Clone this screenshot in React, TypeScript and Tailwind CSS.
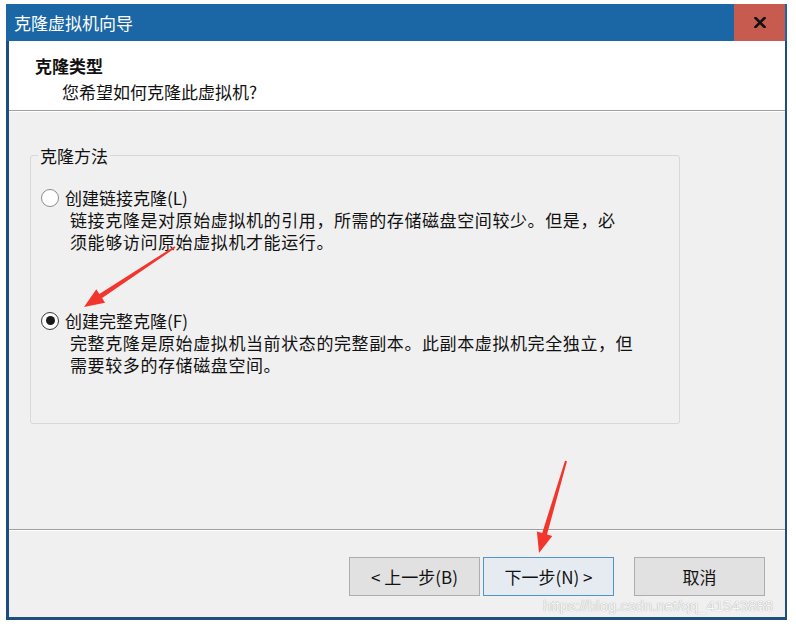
import React from "react";

const cjk = "font-['Noto_Sans_CJK_SC','Noto_Sans',sans-serif]";

const Radio = ({ checked }: { checked?: boolean }) => (
  <span
    className={`flex h-[18px] w-[18px] shrink-0 items-center justify-center rounded-full border bg-white ${
      checked ? "border-[#3a3a3a]" : "border-[#8c8c8c]"
    }`}
  >
    {checked && <span className="h-[9px] w-[9px] rounded-full bg-[#1a1a1a]" />}
  </span>
);

const Option = ({
  label,
  lines,
  checked,
  className,
}: {
  label: string;
  lines: string[];
  checked?: boolean;
  className?: string;
}) => (
  <div className={className}>
    <div className="flex items-center gap-[6px] pl-[10px] leading-[21px]">
      <Radio checked={checked} />
      <span>{label}</span>
    </div>
    <div className="mt-[1px] pl-[39px] leading-[22px] tracking-[0.6px]">
      {lines.map((l) => (
        <div key={l}>{l}</div>
      ))}
    </div>
  </div>
);

const Button = ({ children, primary }: { children: React.ReactNode; primary?: boolean }) => (
  <button
    className={`flex h-[39px] w-[131px] items-center justify-center border text-[17px] text-[#111] ${
      primary ? "border-[#4f93cf] bg-[#e5ebf1]" : "border-[#adadad] bg-[#e1e1e1]"
    }`}
  >
    {children}
  </button>
);

export default function App() {
  return (
    <div className={`relative h-[629px] w-[796px] overflow-hidden bg-white pl-[6px] pt-[4px] ${cjk}`}>
      <div className="flex h-[616px] w-[781px] flex-col bg-[#1d4e7d]">
        {/* title bar */}
        <div className="flex h-[37px] items-center bg-[#1b67a5]">
          <span className="pl-[8px] text-[17px] text-white">克隆虚拟机向导</span>
          <div className="ml-auto mr-[2px] flex h-full w-[51px] items-center justify-center bg-[#c75b50]">
            <svg width="12" height="11" viewBox="0 0 12 11">
              <path d="M1.5 1 L10.5 10 M10.5 1 L1.5 10" stroke="#111" strokeWidth="2.6" strokeLinecap="square" />
            </svg>
          </div>
        </div>

        {/* body */}
        <div className="mb-[3px] ml-[3px] mr-[2px] flex flex-1 flex-col bg-[#f0f0f0] text-[17px] text-[#111]">
          <div className="h-[70px] border-b border-[#a0a0a0] bg-white">
            <div className="pl-[26px] pt-[14px] font-bold leading-[21px]">克隆类型</div>
            <div className="pl-[53px] pt-[5px] leading-[21px]">您希望如何克隆此虚拟机?</div>
          </div>
          <div className="h-px bg-white" />

          <div className="h-[417px]">
            <fieldset className="ml-[21px] mt-[34px] h-[278px] w-[650px] rounded-[3px] border border-[#d8d8d8]">
              <legend className="ml-[7px] px-[2px] leading-[19px]">克隆方法</legend>
              <Option
                className="mt-[22px]"
                label="创建链接克隆(L)"
                lines={["链接克隆是对原始虚拟机的引用，所需的存储磁盘空间较少。但是，必", "须能够访问原始虚拟机才能运行。"]}
              />
              <Option
                className="mt-[57px]"
                checked
                label="创建完整克隆(F)"
                lines={["完整克隆是原始虚拟机当前状态的完整副本。此副本虚拟机完全独立，但", "需要较多的存储磁盘空间。"]}
              />
            </fieldset>
          </div>

          <div className="h-px bg-[#a0a0a0]" />
          <div className="h-px bg-white" />
          <div className="flex justify-end pr-[20px] pt-[26px]">
            <Button>&lt; 上一步(B)</Button>
            <div className="ml-[3px]">
              <Button primary>下一步(N) &gt;</Button>
            </div>
            <div className="ml-[20px]">
              <Button>取消</Button>
            </div>
          </div>
        </div>
      </div>

      {/* red annotation arrows */}
      <svg className="pointer-events-none absolute inset-0" width="796" height="629" viewBox="0 0 796 629">
        <polygon
          fill="#f2362d"
          points="175.5,247.8 102.1,298.1 105.1,302.7 84,307 96.3,289.3 99.3,293.9 174.5,246.2"
        />
        <polygon
          fill="#f2362d"
          points="567,461.3 547,534.5 552.3,536.1 539,553 536.9,531.5 542.2,533.1 565,460.7"
        />
      </svg>

      {/* watermark */}
      <div className="pointer-events-none absolute left-[543px] top-[597px] font-['Liberation_Sans',sans-serif] text-[15px] leading-[18px] text-[#f8f8f8] [text-shadow:0_0_1px_#8a8a8a]">
        https://blog.csdn.net/qq_41543888
      </div>
    </div>
  );
}
